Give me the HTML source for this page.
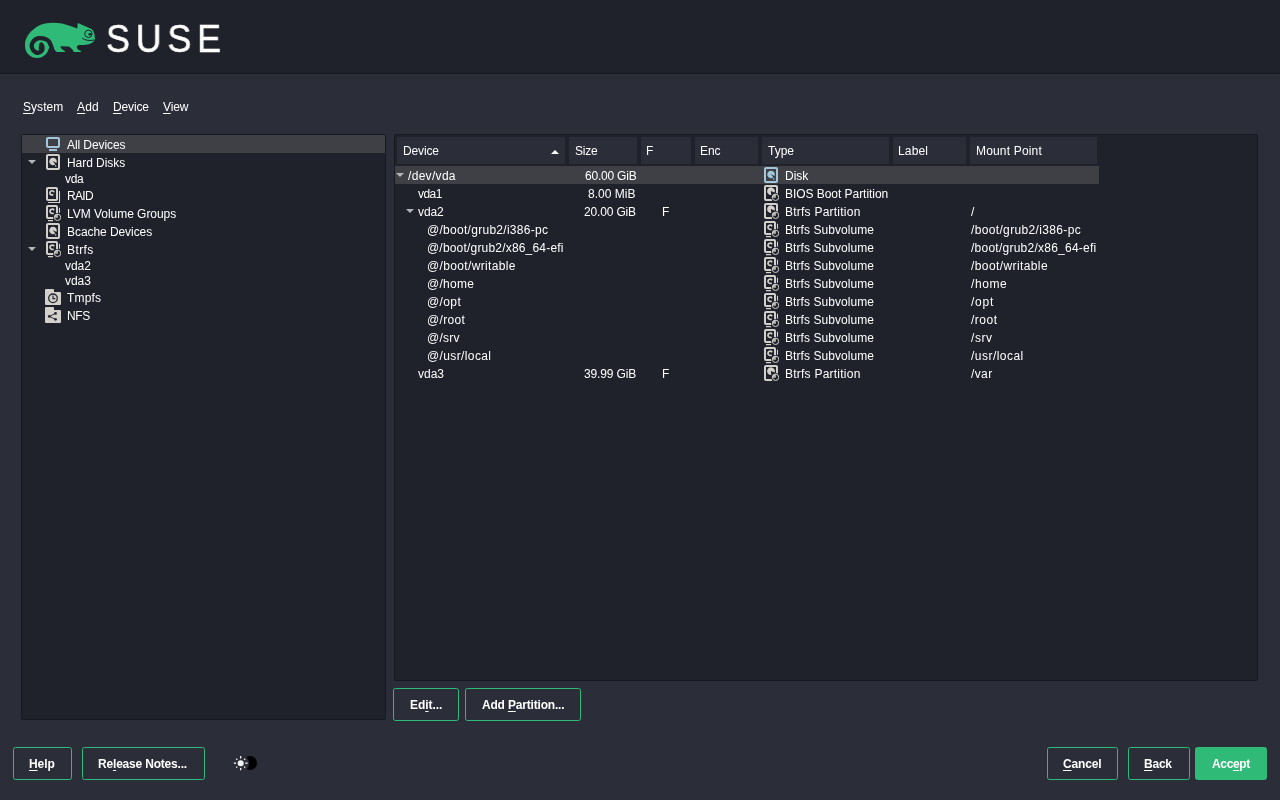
<!DOCTYPE html>
<html lang="en">
<head>
<meta charset="utf-8">
<title>YaST Expert Partitioner</title>
<style>
*{box-sizing:border-box;margin:0;padding:0}
html,body{width:1280px;height:800px;overflow:hidden;background:#2b2d39}
body{font-family:"Liberation Sans",sans-serif;font-size:12px;color:#fff;position:relative;line-height:1}
.abs{position:absolute}
#hdr{position:absolute;left:0;top:0;width:1280px;height:73px;background:#1f212b}
#hdrline{position:absolute;left:0;top:73px;width:1280px;height:1px;background:#161821}
#brand{will-change:transform;position:absolute;left:105.5px;top:17.5px;font-size:39px;letter-spacing:6.3px;transform-origin:0 0;transform:scaleX(0.92);-webkit-text-stroke:0.5px #fff;color:#fff;line-height:42px;white-space:nowrap}
.panel{position:absolute;background:#1f212b;border:1px solid #171922;border-radius:2px}
.t{position:absolute;white-space:nowrap;will-change:transform;font-size:12px;line-height:14px;color:#fff;letter-spacing:-0.25px}
.sel{position:absolute;background:#3f4046}
.hc{position:absolute;top:137px;height:27px;background:#2b2d39}
.ic{position:absolute;width:16px;height:18px;overflow:visible}
.arr{position:absolute;width:0;height:0;border-left:4px solid transparent;border-right:4px solid transparent;border-top:4px solid #b4b5ba}
.ic{color:#d3d0cb}
.ic.blue{color:#a3c6da}
.t.r{text-align:right}
.arr.up{border-top:none;border-bottom:4px solid #fff}
.btn{position:absolute;height:33px;border:1px solid #30ba78;border-radius:2.5px}
.t.b{font-weight:bold}
.t u{text-decoration:underline;text-underline-offset:2px;text-decoration-thickness:1px}
.btn.pri{background:#30ba78}
</style>
</head>
<body>
<div id="hdr"></div>
<div id="hdrline"></div>
<!-- icon definitions -->
<svg width="0" height="0" style="position:absolute">
<defs>
<symbol id="i-mon" viewBox="0 0 16 18">
  <rect x="2" y="3" width="12" height="9" rx="1" fill="none" stroke="currentColor" stroke-width="2"/>
  <rect x="4" y="14" width="8" height="2" fill="currentColor"/>
</symbol>
<symbol id="i-hd" viewBox="0 0 16 18">
  <rect x="2" y="2" width="12" height="14" rx="1" fill="none" stroke="currentColor" stroke-width="2"/>
  <path d="M7.7 8 L10.34 11.49 A3.8 3.8 0 1 1 11.44 10.11 Z" fill="currentColor"/>
  <path d="M9.9 11.4 L11.5 13.1 Q11.5 14 10.5 13.9 Z" fill="currentColor"/>
</symbol>
<symbol id="i-disk" viewBox="0 0 16 18">
  <rect x="2" y="2" width="12" height="14" rx="1" fill="none" stroke="currentColor" stroke-width="2"/>
  <path d="M7.7 8 L10.34 11.49 A3.8 3.8 0 1 1 11.44 10.11 Z" fill="currentColor"/>
  <path d="M9.9 11.4 L11.5 13.1 Q11.5 14 10.5 13.9 Z" fill="currentColor"/>
</symbol>
<symbol id="i-part" viewBox="0 0 16 18">
  <path d="M14 10 V3 Q14 2 13 2 H3 Q2 2 2 3 V15 Q2 16 3 16 H9" fill="none" stroke="currentColor" stroke-width="2"/>
  <path d="M7.8 6.9 L8.3 11.1 A3.9 3.9 0 1 1 11.7 8.5 Z" fill="currentColor"/>
  <circle cx="12.5" cy="13.3" r="4.4" fill="#1f212b"/>
  <circle cx="12.5" cy="13.3" r="3.2" fill="none" stroke="currentColor" stroke-width="1"/>
  <path d="M12.9 13.7 V10 A3.4 3.4 0 0 0 9.2 13.7 Z" fill="currentColor" opacity="0.85"/>
</symbol>
<symbol id="i-sub" viewBox="0 0 16 18">
  <path d="M12 10 V3 Q12 2 11 2 H3 Q2 2 2 3 V13 Q2 14 3 14 H9" fill="none" stroke="currentColor" stroke-width="2"/>
  <path d="M14.5 3.8 V8.8 M3 16.6 H8" fill="none" stroke="currentColor" stroke-width="1.1"/>
  <path d="M8.6 9 A2.2 2.2 0 1 1 9.1 6.2" fill="none" stroke="currentColor" stroke-width="1.7"/>
  <circle cx="12.5" cy="13.3" r="4.4" fill="#1f212b"/>
  <circle cx="12.5" cy="13.3" r="3.2" fill="none" stroke="currentColor" stroke-width="1"/>
  <path d="M12.9 13.7 V10 A3.4 3.4 0 0 0 9.2 13.7 Z" fill="currentColor" opacity="0.85"/>
</symbol>
<symbol id="i-lvm" viewBox="0 0 16 18">
  <path d="M12 10 V3 Q12 2 11 2 H3 Q2 2 2 3 V13 Q2 14 3 14 H9" fill="none" stroke="currentColor" stroke-width="2"/>
  <path d="M14.5 3.8 V8.8 M3 16.6 H8" fill="none" stroke="currentColor" stroke-width="1.1"/>
  <path d="M8.6 9 A2.2 2.2 0 1 1 9.1 6.2" fill="none" stroke="currentColor" stroke-width="1.7"/>
  <circle cx="12.5" cy="13.3" r="4.4" fill="#1f212b"/>
  <circle cx="12.5" cy="13.3" r="3.2" fill="none" stroke="currentColor" stroke-width="1"/>
  <path d="M12.9 13.7 V10 A3.4 3.4 0 0 0 9.2 13.7 Z" fill="currentColor" opacity="0.85"/>
</symbol>
<symbol id="i-raid" viewBox="0 0 16 18">
  <rect x="2" y="2" width="10" height="12" rx="1" fill="none" stroke="currentColor" stroke-width="2"/>
  <path d="M14.5 5 V16.5 H3" fill="none" stroke="currentColor" stroke-width="1.1"/>
  <path d="M8.3 8.5 A2.1 2.1 0 1 1 9 6.3" fill="none" stroke="currentColor" stroke-width="1.7"/>
</symbol>
<symbol id="i-tmp" viewBox="0 0 16 18">
  <path d="M0 2 Q0 1 1 1 H8.2 Q9 1 9 2 V4 H15 Q16 4 16 5 V16 Q16 17 15 17 H1 Q0 17 0 16 Z" fill="currentColor"/>
  <circle cx="8" cy="10.3" r="4.3" fill="none" stroke="#23252f" stroke-width="1.3"/>
  <path d="M8 7.6 V10.6 H10.4" fill="none" stroke="#23252f" stroke-width="1.2"/>
</symbol>
<symbol id="i-nfs" viewBox="0 0 16 18">
  <path d="M0 2 Q0 1 1 1 H8.2 Q9 1 9 2 V4 H15 Q16 4 16 5 V16 Q16 17 15 17 H1 Q0 17 0 16 Z" fill="currentColor"/>
  <path d="M10.5 7.4 L4.3 10.4 L10.5 13.3" fill="none" stroke="#23252f" stroke-width="0.9"/>
  <circle cx="4.3" cy="10.4" r="1.4" fill="#23252f"/>
  <circle cx="10.5" cy="7.4" r="1.4" fill="#23252f"/>
  <circle cx="10.5" cy="13.3" r="1.4" fill="#23252f"/>
</symbol>
</defs>
</svg>

<!-- SUSE logo -->
<svg class="abs" style="left:20px;top:16px" width="80" height="48" viewBox="20 16 80 48">
  <path fill="#30ba78" d="M25 44.1 C25 38 30 30 40.6 24.75 C46 22.5 55 22 62 23.6 C68 25 73 27 77.2 28.5 L77.8 22.9 L91 28.8 C93.5 30 94.6 33 95 39.1 C94.5 41.5 92 43.5 88 44.4 C85 45 81 45 78.75 45 C76.5 45.5 76.3 47.5 77.5 49.1 C78.5 50.2 80 50.6 80.9 51 L80.9 52.1 L73.75 52.1 C73 50 72.3 49.2 71.25 48.5 C70 47 69 46.6 68.1 46.6 L60.6 46.3 C60.3 47.5 61.5 49 63.1 50 L65 51.3 L65 52.1 L56.9 52.1 C55.5 51.5 54 49 53.1 46.6 L45 50 Z"/>
  <circle cx="37" cy="46" r="12" fill="#30ba78"/>
  <path fill="none" stroke="#1f212b" stroke-width="4.2" stroke-linecap="round" d="M52.7 56 C52.6 55 52.4 53.5 52.19 52.25 C51.84 50.17 51.84 48.03 51.06 46.00 C50.28 43.97 49.55 41.36 47.50 40.06 C45.45 38.76 41.20 37.82 38.75 38.19 C36.30 38.55 33.94 40.64 32.81 42.25 C31.69 43.86 31.53 46.21 32.00 47.88 C32.47 49.54 34.19 51.57 35.62 52.25 C37.06 52.93 39.56 52.77 40.62 51.94 C41.69 51.10 41.90 48.50 42.00 47.25 C42.10 46.00 41.38 44.91 41.25 44.44"/>
  <ellipse cx="41.7" cy="48" rx="3" ry="4.6" fill="#1f212b"/>
  <circle cx="88.4" cy="33.8" r="3.7" fill="none" stroke="#1f212b" stroke-width="1"/>
  <circle cx="89.8" cy="34.2" r="1.3" fill="#1f212b"/>
  <path d="M89.8 34.2 H92" stroke="#1f212b" stroke-width="0.9"/>
  <path d="M82.2 38.2 C85 40.6 90 40.9 94.4 40" fill="none" stroke="#1f212b" stroke-width="1"/>
</svg>
<div id="brand">SUSE</div>


<!-- menu -->
<div class="t menu" id="m0" style="left:23.00px;top:100px;letter-spacing:0.058px;"><u>S</u>ystem</div>
<div class="t menu" id="m1" style="left:77.00px;top:100px;letter-spacing:0.201px;"><u>A</u>dd</div>
<div class="t menu" id="m2" style="left:113.00px;top:100px;letter-spacing:-0.157px;"><u>D</u>evice</div>
<div class="t menu" id="m3" style="left:163.00px;top:100px;letter-spacing:-0.127px;"><u>V</u>iew</div>

<!-- left tree panel -->
<div class="panel" style="left:21px;top:134px;width:365px;height:586px"></div>
<div class="sel" style="left:22px;top:135px;width:363px;height:18px"></div>
<svg class="ic blue" style="left:45px;top:135px" viewBox="0 0 16 18"><use href="#i-mon"/></svg>
<div class="t" id="tr0" style="left:67.00px;top:138px;letter-spacing:-0.077px;">All Devices</div>
<div class="arr" style="left:28px;top:160px"></div>
<svg class="ic" style="left:45px;top:153px" viewBox="0 0 16 18"><use href="#i-hd"/></svg>
<div class="t" id="tr1" style="left:67.00px;top:156px;letter-spacing:-0.046px;">Hard Disks</div>
<div class="t" id="tr2" style="left:65.00px;top:172px;letter-spacing:-0.305px;">vda</div>
<svg class="ic" style="left:45px;top:186px" viewBox="0 0 16 18"><use href="#i-raid"/></svg>
<div class="t" id="tr3" style="left:67.00px;top:189px;letter-spacing:-0.652px;">RAID</div>
<svg class="ic" style="left:45px;top:204px" viewBox="0 0 16 18"><use href="#i-lvm"/></svg>
<div class="t" id="tr4" style="left:67.00px;top:207px;letter-spacing:-0.036px;">LVM Volume Groups</div>
<svg class="ic" style="left:45px;top:222px" viewBox="0 0 16 18"><use href="#i-hd"/></svg>
<div class="t" id="tr5" style="left:67.00px;top:225px;letter-spacing:-0.064px;">Bcache Devices</div>
<div class="arr" style="left:28px;top:247px"></div>
<svg class="ic" style="left:45px;top:240px" viewBox="0 0 16 18"><use href="#i-lvm"/></svg>
<div class="t" id="tr6" style="left:67.00px;top:243px;letter-spacing:0.425px;">Btrfs</div>
<div class="t" id="tr7" style="left:65.00px;top:259px;letter-spacing:-0.052px;">vda2</div>
<div class="t" id="tr8" style="left:65.00px;top:274px;letter-spacing:-0.051px;">vda3</div>
<svg class="ic" style="left:45px;top:288px" viewBox="0 0 16 18"><use href="#i-tmp"/></svg>
<div class="t" id="tr9" style="left:67.00px;top:291px;letter-spacing:0.153px;">Tmpfs</div>
<svg class="ic" style="left:45px;top:306px" viewBox="0 0 16 18"><use href="#i-nfs"/></svg>
<div class="t" id="tr10" style="left:67.00px;top:309px;letter-spacing:-0.389px;">NFS</div>

<!-- right table panel -->
<div class="panel" style="left:394px;top:134px;width:864px;height:547px"></div>
<div class="hc" style="left:397px;width:168px"></div><div class="t" id="h0" style="left:403.00px;top:144px;letter-spacing:-0.145px;">Device</div>
<div class="hc" style="left:569px;width:68px"></div><div class="t" id="h1" style="left:575.00px;top:144px;letter-spacing:-0.212px;">Size</div>
<div class="hc" style="left:641px;width:50px"></div><div class="t" id="h2" style="left:646.00px;top:144px;letter-spacing:-0.250px;">F</div>
<div class="hc" style="left:695px;width:63px"></div><div class="t" id="h3" style="left:700.00px;top:144px;letter-spacing:-0.117px;">Enc</div>
<div class="hc" style="left:762px;width:127px"></div><div class="t" id="h4" style="left:768.00px;top:144px;letter-spacing:-0.004px;">Type</div>
<div class="hc" style="left:893px;width:73px"></div><div class="t" id="h5" style="left:898.00px;top:144px;letter-spacing:0.148px;">Label</div>
<div class="hc" style="left:970px;width:127px"></div><div class="t" id="h6" style="left:976.00px;top:144px;letter-spacing:0.176px;">Mount Point</div>
<div class="arr up" style="left:551px;top:149.5px"></div>
<div class="sel" style="left:395px;top:166px;width:704px;height:18px"></div>
<div class="arr" style="left:396px;top:173px"></div>
<div class="t" id="d0" style="left:408.00px;top:169px;letter-spacing:0.311px;">/dev/vda</div>
<div class="t" id="s0" style="left:585.00px;top:169px;letter-spacing:-0.212px;">60.00 GiB</div>
<svg class="ic blue" style="left:763px;top:166px" viewBox="0 0 16 18"><use href="#i-disk"/></svg>
<div class="t" id="y0" style="left:785.00px;top:169px;letter-spacing:-0.016px;">Disk</div>
<div class="t" id="d1" style="left:418.00px;top:187px;letter-spacing:-0.553px;">vda1</div>
<div class="t" id="s1" style="left:588.00px;top:187px;letter-spacing:0.013px;">8.00 MiB</div>
<svg class="ic" style="left:763px;top:184px" viewBox="0 0 16 18"><use href="#i-part"/></svg>
<div class="t" id="y1" style="left:785.00px;top:187px;letter-spacing:-0.047px;">BIOS Boot Partition</div>
<div class="arr" style="left:406px;top:209px"></div>
<div class="t" id="d2" style="left:418.00px;top:205px;letter-spacing:-0.078px;">vda2</div>
<div class="t" id="s2" style="left:584.00px;top:205px;letter-spacing:-0.162px;">20.00 GiB</div>
<div class="t" id="f2" style="left:662.00px;top:205px;letter-spacing:-0.250px;">F</div>
<svg class="ic" style="left:763px;top:202px" viewBox="0 0 16 18"><use href="#i-part"/></svg>
<div class="t" id="y2" style="left:785.00px;top:205px;letter-spacing:0.235px;">Btrfs Partition</div>
<div class="t" id="p2" style="left:971.00px;top:205px;letter-spacing:-0.250px;">/</div>
<div class="t" id="d3" style="left:427.00px;top:223px;letter-spacing:0.283px;">@/boot/grub2/i386-pc</div>
<svg class="ic" style="left:763px;top:220px" viewBox="0 0 16 18"><use href="#i-sub"/></svg>
<div class="t" id="y3" style="left:785.00px;top:223px;letter-spacing:0.071px;">Btrfs Subvolume</div>
<div class="t" id="p3" style="left:971.00px;top:223px;letter-spacing:0.347px;">/boot/grub2/i386-pc</div>
<div class="t" id="d4" style="left:427.00px;top:241px;letter-spacing:0.189px;">@/boot/grub2/x86_64-efi</div>
<svg class="ic" style="left:763px;top:238px" viewBox="0 0 16 18"><use href="#i-sub"/></svg>
<div class="t" id="y4" style="left:785.00px;top:241px;letter-spacing:0.071px;">Btrfs Subvolume</div>
<div class="t" id="p4" style="left:971.00px;top:241px;letter-spacing:0.244px;">/boot/grub2/x86_64-efi</div>
<div class="t" id="d5" style="left:427.00px;top:259px;letter-spacing:0.346px;">@/boot/writable</div>
<svg class="ic" style="left:763px;top:256px" viewBox="0 0 16 18"><use href="#i-sub"/></svg>
<div class="t" id="y5" style="left:785.00px;top:259px;letter-spacing:0.071px;">Btrfs Subvolume</div>
<div class="t" id="p5" style="left:971.00px;top:259px;letter-spacing:0.401px;">/boot/writable</div>
<div class="t" id="d6" style="left:427.00px;top:277px;letter-spacing:0.278px;">@/home</div>
<svg class="ic" style="left:763px;top:274px" viewBox="0 0 16 18"><use href="#i-sub"/></svg>
<div class="t" id="y6" style="left:785.00px;top:277px;letter-spacing:0.071px;">Btrfs Subvolume</div>
<div class="t" id="p6" style="left:971.00px;top:277px;letter-spacing:0.570px;">/home</div>
<div class="t" id="d7" style="left:427.00px;top:295px;letter-spacing:0.378px;">@/opt</div>
<svg class="ic" style="left:763px;top:292px" viewBox="0 0 16 18"><use href="#i-sub"/></svg>
<div class="t" id="y7" style="left:785.00px;top:295px;letter-spacing:0.071px;">Btrfs Subvolume</div>
<div class="t" id="p7" style="left:971.00px;top:295px;letter-spacing:0.784px;">/opt</div>
<div class="t" id="d8" style="left:427.00px;top:313px;letter-spacing:0.345px;">@/root</div>
<svg class="ic" style="left:763px;top:310px" viewBox="0 0 16 18"><use href="#i-sub"/></svg>
<div class="t" id="y8" style="left:785.00px;top:313px;letter-spacing:0.071px;">Btrfs Subvolume</div>
<div class="t" id="p8" style="left:971.00px;top:313px;letter-spacing:0.509px;">/root</div>
<div class="t" id="d9" style="left:427.00px;top:331px;letter-spacing:0.234px;">@/srv</div>
<svg class="ic" style="left:763px;top:328px" viewBox="0 0 16 18"><use href="#i-sub"/></svg>
<div class="t" id="y9" style="left:785.00px;top:331px;letter-spacing:0.071px;">Btrfs Subvolume</div>
<div class="t" id="p9" style="left:971.00px;top:331px;letter-spacing:0.583px;">/srv</div>
<div class="t" id="d10" style="left:427.00px;top:349px;letter-spacing:0.381px;">@/usr/local</div>
<svg class="ic" style="left:763px;top:346px" viewBox="0 0 16 18"><use href="#i-sub"/></svg>
<div class="t" id="y10" style="left:785.00px;top:349px;letter-spacing:0.071px;">Btrfs Subvolume</div>
<div class="t" id="p10" style="left:971.00px;top:349px;letter-spacing:0.469px;">/usr/local</div>
<div class="t" id="d11" style="left:418.00px;top:367px;letter-spacing:-0.014px;">vda3</div>
<div class="t" id="s11" style="left:584.00px;top:367px;letter-spacing:-0.149px;">39.99 GiB</div>
<div class="t" id="f11" style="left:662.00px;top:367px;letter-spacing:-0.250px;">F</div>
<svg class="ic" style="left:763px;top:364px" viewBox="0 0 16 18"><use href="#i-part"/></svg>
<div class="t" id="y11" style="left:785.00px;top:367px;letter-spacing:0.235px;">Btrfs Partition</div>
<div class="t" id="p11" style="left:971.00px;top:367px;letter-spacing:0.373px;">/var</div>

<!-- buttons -->
<div class="btn" style="left:393px;top:688px;width:66px"></div><div class="t b" id="b0" style="left:410.00px;top:698px;letter-spacing:-0.040px;">Ed<u>i</u>t...</div>
<div class="btn" style="left:465px;top:688px;width:116px"></div><div class="t b" id="b1" style="left:482.00px;top:698px;letter-spacing:-0.186px;">Add <u>P</u>artition...</div>
<div class="btn" style="left:13px;top:747px;width:59px"></div><div class="t b" id="b2" style="left:29.00px;top:757px;letter-spacing:-0.092px;"><u>H</u>elp</div>
<div class="btn" style="left:82px;top:747px;width:123px"></div><div class="t b" id="b3" style="left:98.00px;top:757px;letter-spacing:-0.193px;">Re<u>l</u>ease Notes...</div>
<div class="btn" style="left:1047px;top:747px;width:71px"></div><div class="t b" id="b4" style="left:1063.00px;top:757px;letter-spacing:-0.165px;"><u>C</u>ancel</div>
<div class="btn" style="left:1128px;top:747px;width:62px"></div><div class="t b" id="b5" style="left:1144.00px;top:757px;letter-spacing:-0.222px;"><u>B</u>ack</div>
<div class="btn pri" style="left:1195px;top:747px;width:72px"></div><div class="t b" id="b6" style="left:1212.00px;top:757px;letter-spacing:-0.356px;">Acc<u>e</u>pt</div>

<!-- theme toggle -->
<svg class="abs" style="left:230px;top:753px" width="30" height="20" viewBox="230 753 30 20">
  <circle cx="250" cy="763" r="7" fill="#000"/>
  <circle cx="240.7" cy="763.2" r="8.4" fill="#2b2d39"/>
  <circle cx="240.7" cy="763.2" r="3" fill="#f4f4f4"/>
  <g stroke="#fff" stroke-width="1.2" stroke-linecap="butt">
    <path d="M240.7 756.1 v2.3 M240.7 768 v2.3 M233.8 763.2 h2.3 M245.3 763.2 h2.3 M236.2 758.7 l1.1 1.1 M244.1 766.6 l1.1 1.1 M245.2 758.7 l-1.1 1.1 M237.3 766.6 l-1.1 1.1"/>
  </g>
</svg>
</body>
</html>
